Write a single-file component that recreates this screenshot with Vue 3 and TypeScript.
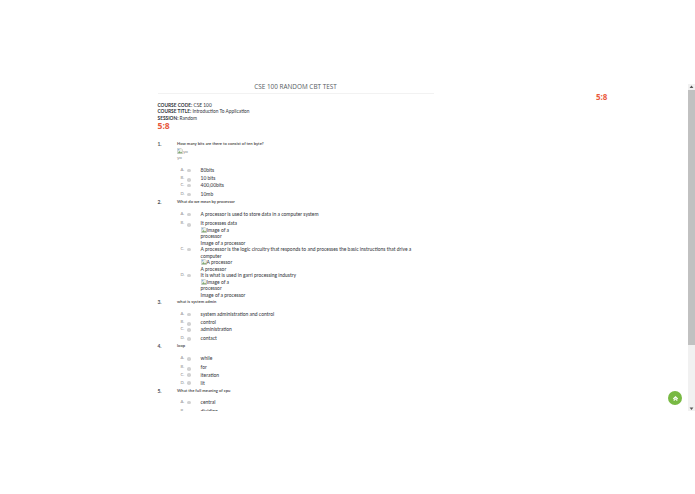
<script setup lang="ts">
interface Opt { letter: string; text: string; gap: number; extra?: { alt: string; caption: string; wide?: boolean } }
interface Q { n: string; text: string; figure?: boolean; lead: number; opts: Opt[] }
const questions: Q[] = [
  { n: '1.', text: 'How many bits are there to consist of ten byte?', figure: true, lead: 6.5, opts: [
    { letter: 'A', text: '80bits', gap: 1.5 },
    { letter: 'B', text: '10 bits', gap: 0.5 },
    { letter: 'C', text: '400,00bits', gap: 2.5 },
    { letter: 'D', text: '10mb', gap: 1.5 } ] },
  { n: '2.', text: 'What do we mean by processor', lead: 5.5, opts: [
    { letter: 'A', text: 'A processor is used to store data in a computer system', gap: 2.5 },
    { letter: 'B', text: 'It processes data', gap: 0, extra: { alt: 'Image of a processor', caption: 'Image of a processor' } },
    { letter: 'C', text: 'A processor is the logic circuitry that responds to and processes the basic instructions that drive a computer', gap: 0, extra: { alt: 'A processor', caption: 'A processor', wide: true } },
    { letter: 'D', text: 'It is what is used in garri processing industry', gap: 1, extra: { alt: 'Image of a processor', caption: 'Image of a processor' } } ] },
  { n: '3.', text: 'what is system admin', lead: 5.5, opts: [
    { letter: 'A', text: 'system administration and control', gap: 1.5 },
    { letter: 'B', text: 'control', gap: 0.5 },
    { letter: 'C', text: 'administration', gap: 2.5 },
    { letter: 'D', text: 'contact', gap: 1.5 } ] },
  { n: '4.', text: 'loop', lead: 5.5, opts: [
    { letter: 'A', text: 'while', gap: 2.5 },
    { letter: 'B', text: 'for', gap: 0.5 },
    { letter: 'C', text: 'iteration', gap: 1.5 },
    { letter: 'D', text: 'lit', gap: 1.5 } ] },
  { n: '5.', text: 'What the full meaning of cpu', lead: 5, opts: [
    { letter: 'A', text: 'central', gap: 2 },
    { letter: 'B', text: 'dividing', gap: 0 } ] }
]
</script>

<template>
  <div class="page">
    <div class="viewport">
      <main class="content">
        <h1 class="title">CSE 100 RANDOM CBT TEST</h1>
        <div class="meta"><b>COURSE CODE:</b> CSE 100</div>
        <div class="meta"><b>COURSE TITLE:</b> Introduction To Application</div>
        <div class="meta"><b>SESSION:</b> Random</div>
        <div class="timer">5:8</div>
        <section v-for="q in questions" :key="q.n" class="question">
          <div class="num">{{ q.n }}</div>
          <div class="body">
            <div class="qtext">{{ q.text }}</div>
            <div v-if="q.figure" class="figure">
              <div><svg class="broken" viewBox="0 0 8 8"><path d="M.5.5h5l2 2v5h-7z" fill="#eef3ea" stroke="#aaa" stroke-width=".6"/><path d="M1 7l2-3 2 2 1-1 1 2z" fill="#7fa870"/><path d="M1.2 1.2h2v2h-2z" fill="#8fb3dd"/></svg>yo</div>
              <div>yo</div>
            </div>
            <div class="opts" :style="{ marginTop: q.lead + 'px' }">
              <div v-for="o in q.opts" :key="o.letter" class="opt" :style="{ marginBottom: o.gap + 'px' }">
                <span class="letter">{{ o.letter }}.</span>
                <span class="radio" :class="{ low: o.letter === 'B' }"></span>
                <div class="otext">
                  <div>{{ o.text }}</div>
                  <template v-if="o.extra">
                    <div class="alt" :class="{ wide: o.extra.wide }"><svg class="broken" viewBox="0 0 8 8"><path d="M.5.5h5l2 2v5h-7z" fill="#eef3ea" stroke="#aaa" stroke-width=".6"/><path d="M1 7l2-3 2 2 1-1 1 2z" fill="#7fa870"/><path d="M1.2 1.2h2v2h-2z" fill="#8fb3dd"/></svg>{{ o.extra.alt }}</div>
                    <div>{{ o.extra.caption }}</div>
                  </template>
                </div>
              </div>
            </div>
          </div>
        </section>
      </main>
      <div class="scrollbar">
        <svg class="arrow" viewBox="0 0 7 5.5"><path d="M3.5 1.5 5.4 4H1.6z" fill="#555"/></svg>
        <div class="thumb"></div>
        <div class="track"></div>
        <svg class="arrow" viewBox="0 0 7 5.5"><path d="M3.5 4 5.4 1.5H1.6z" fill="#555"/></svg>
      </div>
      <div class="clock">5:8</div>
      <button class="top-btn" aria-label="Back to top">
        <svg viewBox="0 0 8 8"><path d="M4 1 7 4 6 5 4 3 2 5 1 4zM4 3.6 6.4 6 5.6 6.8 4 5.2 2.4 6.8 1.6 6z" fill="#fff"/></svg>
      </button>
    </div>
  </div>
</template>

<style>
html, body { margin: 0; background: #fff; overflow: hidden; }
</style>

<style scoped>
.page {
  width: 695px;
  height: 494px;
  padding-top: 82px;
  box-sizing: border-box;
  font-family: Lato, "Open Sans", sans-serif;
  color: #3a3f44;
}
.viewport {
  position: relative;
  height: 329px;
  display: flex;
  overflow: hidden;
}
.content {
  flex: 1;
  min-width: 0;
  padding-left: 157.5px;
  font-size: 4.95px;
  line-height: 6.5px;
}
.title {
  width: 276px;
  margin: 0 0 8.25px;
  padding-bottom: 0.5px;
  border-bottom: 1px solid #f2f2f2;
  text-align: center;
  font-family: "Open Sans", sans-serif;
  font-size: 6.4px;
  line-height: 10px;
  font-weight: 400;
  color: #555b61;
}
.meta { font-size: 4.8px; color: #30353a; }
.meta b { font-weight: 700; }
.timer {
  margin-bottom: 9px;
  font-family: "Open Sans", sans-serif;
  font-size: 8.6px;
  line-height: 11px;
  font-weight: 700;
  color: #e8583c;
}
.question { display: flex; }
.num { width: 19.5px; font-weight: 700; color: #4a4f55; }
.body { flex: 1; min-width: 0; }
.qtext { font-size: 4.15px; font-weight: 700; color: #555; }
.figure { font-size: 4.6px; color: #888; }
.broken { display: inline-block; width: 6px; height: 6px; vertical-align: -1px; }
.opts { margin-left: 3.5px; }
.opt { display: flex; width: 233px; }
.letter { width: 6.5px; font-size: 4.2px; color: #8a8a8a; }
.radio {
  width: 3.6px;
  height: 3.6px;
  margin: 1.5px 10px 0 0;
  flex: none;
  box-sizing: border-box;
  background: #d2d2d2;
  border-radius: 50%;
}
.radio.low { margin-top: 3px; }
.otext { flex: 1; min-width: 0; font-weight: 500; color: #3c4146; }
.alt { width: 36px; }
.alt.wide { width: 60px; }
.scrollbar {
  width: 7px;
  margin-top: 2px;
  flex: none;
  display: flex;
  flex-direction: column;
  background: #f1f1f1;
}
.arrow { width: 7px; height: 5.5px; flex: none; }
.thumb { height: 255px; background: #c1c1c1; flex: none; }
.track { flex: 1; }
.clock {
  position: absolute;
  left: 596px;
  top: 9px;
  font-family: "Open Sans", sans-serif;
  font-size: 8px;
  line-height: 12px;
  font-weight: 700;
  color: #ea5a3e;
}
.top-btn {
  position: absolute;
  left: 668px;
  top: 309px;
  width: 14px;
  height: 14px;
  padding: 3.5px;
  border: 0;
  border-radius: 50%;
  background: #78b943;
  display: flex;
}
.top-btn svg { width: 7px; height: 7px; }
</style>
